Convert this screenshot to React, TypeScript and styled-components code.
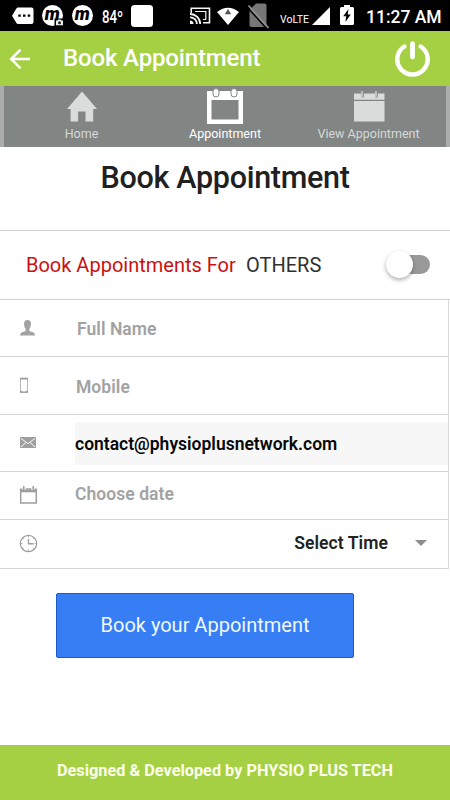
import React from 'react';
import styled, { createGlobalStyle } from 'styled-components';

const GlobalStyle = createGlobalStyle`
  * { box-sizing: border-box; }
  body { margin: 0; background: #fff; font-family: Roboto, sans-serif; }
`;

const Screen = styled.div`
  width: 450px;
  height: 800px;
  display: flex;
  flex-direction: column;
  overflow: hidden;
  background: #fff;
`;

const StatusBar = styled.div`
  flex: 0 0 31px;
  display: flex;
  align-items: flex-start;
  background: #000;
  color: #fff;
`;

const StatusIcon = styled.svg<{ $gap: number }>`
  flex: none;
  display: block;
  margin-left: ${(p) => p.$gap}px;
`;

const StatusText = styled.span<{ $gap: number; $width: number; $size: number; $top: number; $weight?: number; $squeeze?: number }>`
  flex: none;
  width: ${(p) => p.$width}px;
  margin-left: ${(p) => p.$gap}px;
  padding-top: ${(p) => p.$top}px;
  font-size: ${(p) => p.$size}px;
  line-height: 20px;
  font-weight: ${(p) => p.$weight ?? 500};
  white-space: nowrap;
  transform: scaleX(${(p) => p.$squeeze ?? 1});
  transform-origin: left;
`;

const Header = styled.header`
  flex: 0 0 55px;
  display: flex;
  align-items: center;
  padding: 0 19px 0 9px;
  background: #a6d043;
`;

const HeaderTitle = styled.h1`
  flex: 1;
  margin: -1px 0 0 32px;
  color: #fff;
  font-size: 24px;
  font-weight: 500;
  line-height: 30px;
  letter-spacing: -0.15px;
  white-space: nowrap;
`;

const IconButton = styled.button`
  display: block;
  padding: 0;
  border: 0;
  background: none;
  line-height: 0;
`;

const Tabs = styled.nav`
  flex: 0 0 61px;
  display: grid;
  grid-template-columns: 155px 132px 155px;
  border-left: 4px solid #aaadac;
  border-right: 4px solid #aaadac;
  background: #818584;
`;

const Tab = styled.div<{ $active?: boolean }>`
  display: flex;
  flex-direction: column;
  align-items: center;
  color: ${(p) => (p.$active ? '#fff' : '#d6d9d8')};
  font-size: 12.5px;
  line-height: 17px;
  white-space: nowrap;

  svg { display: block; height: 39px; flex: none; }
`;

const PageTitle = styled.h2`
  flex: 0 0 84px;
  margin: 0;
  padding-top: 13px;
  border-bottom: 1px solid #d2d2d2;
  color: #202020;
  font-size: 30.5px;
  font-weight: 500;
  line-height: 36px;
  letter-spacing: -0.3px;
  text-align: center;
  white-space: nowrap;
`;

const ToggleRow = styled.div`
  flex: 0 0 69px;
  display: flex;
  align-items: center;
  padding: 0 20px 0 26px;
  border-bottom: 1px solid #d2d2d2;
  color: #303030;
  font-size: 20px;
  white-space: nowrap;
`;

const ToggleLabel = styled.span`
  width: 220px;
  color: #cc100f;
`;

const Switch = styled.button`
  display: flex;
  align-items: center;
  width: 42px;
  height: 19px;
  margin: -2px 0 0 auto;
  padding: 0;
  border: 0;
  border-radius: 10px;
  background: #999;
`;

const Knob = styled.span`
  flex: none;
  width: 27px;
  height: 27px;
  margin-left: -2px;
  border-radius: 50%;
  background: #fff;
  box-shadow: 0 2px 4px rgba(0, 0, 0, 0.32);
`;

const Form = styled.div`
  flex: none;
  width: 449px;
  border-right: 1px solid #d8d8d8;
`;

const Row = styled.div<{ $height: number }>`
  display: flex;
  align-items: center;
  height: ${(p) => p.$height}px;
  border-bottom: 1px solid #d4d4d4;
`;

const RowIcon = styled.span<{ $width: number }>`
  flex: 0 0 ${(p) => p.$width}px;
  padding-left: 19px;
  line-height: 0;
`;

const Placeholder = styled.span<{ $top?: number; $bottom?: number }>`
  color: #a2a2a2;
  font-size: 17.5px;
  font-weight: 600;
  line-height: 20px;
  letter-spacing: 0.05px;
  padding: ${(p) => p.$top ?? 0}px 0 ${(p) => p.$bottom ?? 0}px;
`;

const EmailField = styled.div`
  flex: 1;
  height: 43px;
  padding-top: 1px;
  background: #f7f7f7;
  color: #080808;
  font-size: 17.5px;
  font-weight: 600;
  line-height: 43px;
  white-space: nowrap;
`;

const Select = styled.div`
  flex: 1;
  display: flex;
  justify-content: flex-end;
  align-items: center;
  gap: 27px;
  padding: 0 21px 3px 0;
  color: #222;
  font-size: 17.5px;
  font-weight: 600;
  letter-spacing: 0.08px;
`;

const Caret = styled.span`
  border: 6.5px solid transparent;
  border-top-color: #8e8e8e;
  border-bottom: 0;
`;

const Submit = styled.button`
  flex: none;
  width: 298px;
  height: 65px;
  margin: 24px 0 0 56px;
  padding: 0 0 1px;
  border: 1px solid #1d5cc4;
  border-radius: 2px;
  background: #377ef4;
  color: #eff8ff;
  font-family: inherit;
  font-size: 20px;
`;

const Footer = styled.footer`
  flex: 0 0 55px;
  margin-top: auto;
  padding-top: 16px;
  background: #a6d043;
  color: #fbffeb;
  font-size: 16.3px;
  font-weight: 700;
  line-height: 20px;
  text-align: center;
  white-space: nowrap;
`;

const MBadge = ({ gap, camera }: { gap: number; camera?: boolean }) => (
  <StatusIcon $gap={gap} width="22" height="31" viewBox="0 0 22 31">
    <circle cx="10.5" cy="15.5" r="10.5" fill="#fff" />
    <text x="10.3" y="20.3" textAnchor="middle" fontFamily="Roboto, sans-serif" fontSize="18" fontWeight="900" fontStyle="italic" fill="#000">m</text>
    {camera && (
      <g>
        <path d="M12.500 18.500H22V28h-9.500z" fill="#000" />
        <path d="M14 20.500h1.500l1-1h2l1 1H21v4.700h-7z" fill="#eee" />
        <circle cx="17.500" cy="22.800" r="1.500" fill="#222" />
      </g>
    )}
  </StatusIcon>
);

export default function App() {
  return (
    <>
      <GlobalStyle />
      <Screen>
        <StatusBar>
          <StatusIcon $gap={12} width="22" height="31" viewBox="0 0 22 31">
            <path d="M6 7.500h13.500q2 0 2 2v12.500q0 2-2 2H6q-1 0-1.600-1L0 15.700l4.400-7.200q.6-1 1.600-1z" fill="#fff" />
            <path d="M6.300 14.500h2.500v2.300H6.300zM11 14.500h2.500v2.300H11zM15.700 14.500h2.500v2.300h-2.500z" fill="#000" />
          </StatusIcon>
          <MBadge gap={8} camera />
          <MBadge gap={8} />
          <StatusText $gap={8} $width={22} $size={17.5} $top={7} $squeeze={0.76}>84º</StatusText>
          <StatusIcon $gap={7} width="22" height="31" viewBox="0 0 22 31">
            <rect x="0" y="5" width="22" height="22" rx="3.500" fill="#fff" />
          </StatusIcon>
          <StatusIcon $gap={37} width="21" height="31" viewBox="0 0 21 31" fill="none" stroke="#f4f4f4">
            <path d="M1.200 13V8.200h18.300v14.600H13" strokeWidth="1.600" />
            <path d="M5 11.500h10.800v8H13" strokeWidth="1.200" />
            <path d="M0 14a10 10 0 0 1 10.200 10M0 17.300a6.700 6.700 0 0 1 6.900 6.700" strokeWidth="1.800" />
            <path d="M0 20.500a3.500 3.500 0 0 1 3.500 3.500H0z" fill="#f4f4f4" stroke="none" />
          </StatusIcon>
          <StatusIcon $gap={6} width="22" height="31" viewBox="0 0 22 31">
            <path d="M0 12Q11 3.500 22 12L11 25z" fill="#fff" />
            <path d="M7.800 14.300L11 9l3.200 5.300z" fill="#555" />
          </StatusIcon>
          <StatusIcon $gap={8} width="25" height="31" viewBox="0 0 25 31">
            <path d="M9 3.500h8.500q2 0 2 2V25q0 2-2 2h-13q-2 0-2-2V10z" fill="#777" />
            <path d="M.5 7.500l19.500 21.500" stroke="#000" strokeWidth="1.500" />
            <path d="M1.500 5.500l20 22.500" stroke="#8f8f8f" strokeWidth="1.800" />
          </StatusIcon>
          <StatusText $gap={8} $width={30} $size={10.5} $top={10} $weight={400}>VoLTE</StatusText>
          <StatusIcon $gap={2} width="18" height="31" viewBox="0 0 18 31">
            <path d="M18 7v18H0z" fill="#fff" />
          </StatusIcon>
          <StatusIcon $gap={10} width="14" height="31" viewBox="0 0 14 31">
            <path d="M4 5h6v2h2.500q1.500 0 1.500 1.500v15q0 1.500-1.500 1.500h-11Q0 25 0 23.500v-15Q0 7 1.500 7H4z" fill="#fff" />
            <path d="M8.500 9L3.200 16.300h3L5.400 22l5.400-7.500H7.700z" fill="#000" />
          </StatusIcon>
          <StatusText $gap={12} $width={78} $size={17.5} $top={7}>11:27 AM</StatusText>
        </StatusBar>

        <Header>
          <IconButton aria-label="Back">
            <svg width="22" height="22" viewBox="0 0 22 22" fill="none" stroke="#fff" strokeWidth="2.500">
              <path d="M21 11H3M11.500 1.700L2.200 11l9.300 9.300" />
            </svg>
          </IconButton>
          <HeaderTitle>Book Appointment</HeaderTitle>
          <IconButton aria-label="Log out">
            <svg width="36" height="36" viewBox="0 0 36 36" fill="none" stroke="#fff" strokeLinecap="round">
              <path d="M9.300 5.500a15.200 15.200 0 1 0 16.400 0" strokeWidth="4.400" />
              <path d="M17.500 2.700v13.300" strokeWidth="4.800" />
            </svg>
          </IconButton>
        </Header>

        <Tabs>
          <Tab>
            <svg width="32" viewBox="0 0 32 39">
              <path d="M16 5.500L31 23h-3.800v12.500h-7.700v-10h-7.400v10H4.600V23H1z" fill="#d9dcda" />
            </svg>
            Home
          </Tab>
          <Tab $active>
            <svg width="36" viewBox="0 0 36 39">
              <path d="M0 5h36v33H0zM4.500 14v19.500h27V14z" fill="#fff" fillRule="evenodd" />
              <g fill="#fff" stroke="#818584">
                <rect x="6" y="2.500" width="6" height="8.500" rx="3" />
                <rect x="24" y="2.500" width="6" height="8.500" rx="3" />
              </g>
            </svg>
            Appointment
          </Tab>
          <Tab>
            <svg width="32" viewBox="0 0 32 39">
              <path d="M1 7.500h30.500v6.200H1zM1 15h30.500v20.500H1z" fill="#d9dcda" />
              <path d="M9.500 5v6.500M23.500 5v6.500" stroke="#818584" strokeWidth="2.500" />
              <path d="M9 5v6M23 5v6" stroke="#d9dcda" strokeWidth="1.300" />
            </svg>
            View Appointment
          </Tab>
        </Tabs>

        <PageTitle>Book Appointment</PageTitle>

        <ToggleRow>
          <ToggleLabel>Book Appointments For</ToggleLabel>
          <span>OTHERS</span>
          <Switch role="switch" aria-checked="false" aria-label="Book for others">
            <Knob />
          </Switch>
        </ToggleRow>

        <Form>
          <Row $height={57}>
            <RowIcon $width={77}>
              <svg width="17" height="16" viewBox="0 0 17 16">
                <path d="M8.500 0Q12 0 12 4q0 3-1.700 5v1.500q.2.800 2 1.300Q16 12.500 16 15.500H1q0-3 3.700-3.700 1.800-.5 2-1.300V9Q5 7 5 4q0-4 3.500-4z" fill="#a2a2a2" />
              </svg>
            </RowIcon>
            <Placeholder $top={2}>Full Name</Placeholder>
          </Row>
          <Row $height={58}>
            <RowIcon $width={76}>
              <svg width="10" height="17" viewBox="0 0 10 17">
                <path d="M1.500 1.500h7v14h-7z" fill="none" stroke="#b8b8b8" strokeWidth="1" />
                <path d="M1 1.700h8M1 14.800h2.500M4.500 14.800h1M6.500 14.800H9" stroke="#999" strokeWidth="1.800" />
              </svg>
            </RowIcon>
            <Placeholder $top={2}>Mobile</Placeholder>
          </Row>
          <Row $height={57}>
            <RowIcon $width={75}>
              <svg width="18" height="12" viewBox="0 0 18 12">
                <path d="M1 0h16v11H1z" fill="#9e9e9e" />
                <path d="M2 1.500l7 5 7-5M2 10l5-4.500M16 10l-5-4.500" fill="none" stroke="#fff" strokeWidth="1" />
              </svg>
            </RowIcon>
            <EmailField>contact@physioplusnetwork.com</EmailField>
          </Row>
          <Row $height={48}>
            <RowIcon $width={75}>
              <svg width="20" height="20" viewBox="0 0 20 20">
                <path d="M1.700 3v14h15.600V3" fill="none" stroke="#9e9e9e" strokeWidth="1.500" />
                <path d="M1 2.500h17v3.800H1z" fill="#9e9e9e" />
                <path d="M5 0v4M9.500 2v1.500M14 0v4" stroke="#fff" strokeWidth="3" />
                <path d="M4.800 0v4M14.200 0v4M7.500 3h4" stroke="#9e9e9e" strokeWidth="1.500" />
              </svg>
            </RowIcon>
            <Placeholder $bottom={3}>Choose date</Placeholder>
          </Row>
          <Row $height={49}>
            <RowIcon $width={75}>
              <svg width="19" height="20" viewBox="0 0 19 20" fill="none" stroke="#9e9e9e">
                <circle cx="9.500" cy="9.500" r="8.200" strokeWidth="1.200" />
                <path d="M9.500 5v4.700h5" strokeWidth="1.400" />
                <path d="M9.500 2v1.500M9.500 15.500V17M2 9.500h1.500M15.500 9.500H17M4.200 4.200l.8.800M14.800 4.200l-.8.800M4.200 14.800l.8-.8M14.800 14.800l-.8-.8" strokeWidth=".8" />
              </svg>
            </RowIcon>
            <Select>
              <span>Select Time</span>
              <Caret />
            </Select>
          </Row>
        </Form>

        <Submit>Book your Appointment</Submit>

        <Footer>Designed &amp; Developed by PHYSIO PLUS TECH</Footer>
      </Screen>
    </>
  );
}
